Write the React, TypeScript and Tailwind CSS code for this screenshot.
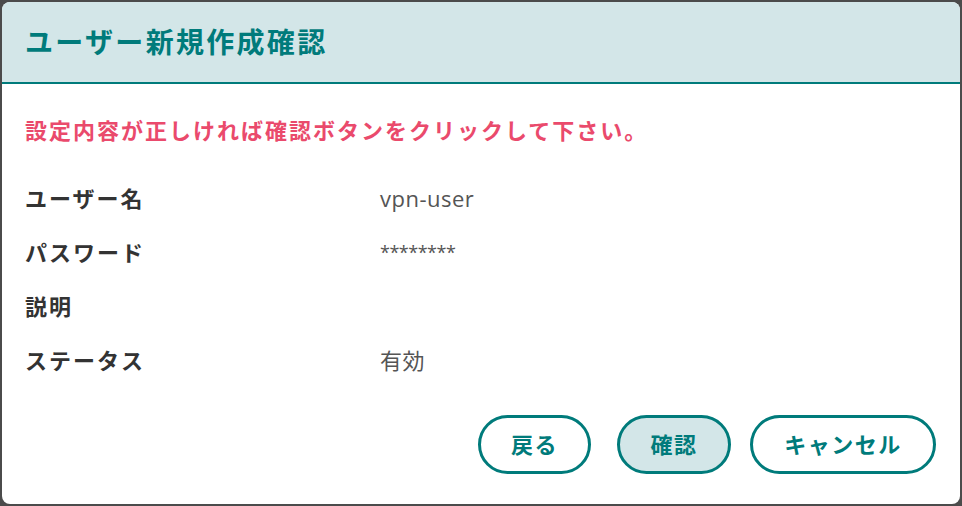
const rows: { label: string; value: string; mask?: boolean }[] = [
  { label: "ユーザー名", value: "vpn-user" },
  { label: "パスワード", value: "********", mask: true },
  { label: "説明", value: "" },
  { label: "ステータス", value: "有効" },
];

const font = { fontFamily: '"Open Sans", "Noto Sans CJK JP", sans-serif' };

export default function App() {
  return (
    <div className="h-[506px] w-[962px] bg-[#4b4b4b] px-[2px] pt-[2px] pb-[2px]" style={font}>
      <div className="flex h-full w-full flex-col overflow-hidden rounded-[8px] bg-white">
        <div className="flex h-[82px] shrink-0 items-center border-b-2 border-[#007b7b] bg-[#d3e6e8] px-[23px]">
          <h1 className="text-[28px] font-bold tracking-[2.3px] text-[#007b7b]">ユーザー新規作成確認</h1>
        </div>

        <div className="flex flex-1 flex-col px-[23px] pt-[31px]">
          <p className="text-[22px] leading-[30px] font-bold tracking-[2px] text-[#ea4a6c]">
            設定内容が正しければ確認ボタンをクリックして下さい。
          </p>

          <div className="mt-[26px] flex flex-col">
            {rows.map((row) => (
              <div key={row.label} className="flex h-[54px] items-center">
                <span className="w-[355px] shrink-0 text-[22px] font-bold tracking-[2px] text-[#333333]">{row.label}</span>
                {row.mask ? (
                  <span className="text-[18px] tracking-[-0.5px] text-[#555555]">{row.value}</span>
                ) : (
                  <span className="text-[22px] tracking-[0.5px] text-[#555555]">{row.value}</span>
                )}
              </div>
            ))}
          </div>

          <div className="mt-[28px] flex justify-end pr-[1px]">
            <button className="h-[59px] w-[113px] rounded-full border-[3px] border-[#007b7b] bg-white text-[22px] font-bold tracking-[1.5px] text-[#007b7b]">
              戻る
            </button>
            <button className="ml-[26px] h-[59px] w-[114px] rounded-full border-[3px] border-[#007b7b] bg-[#d3e6e8] text-[22px] font-bold tracking-[1.5px] text-[#007b7b]">
              確認
            </button>
            <button className="ml-[19px] h-[59px] w-[186px] rounded-full border-[3px] border-[#007b7b] bg-white text-[22px] font-bold tracking-[1.5px] text-[#007b7b]">
              キャンセル
            </button>
          </div>
        </div>
      </div>
    </div>
  );
}
